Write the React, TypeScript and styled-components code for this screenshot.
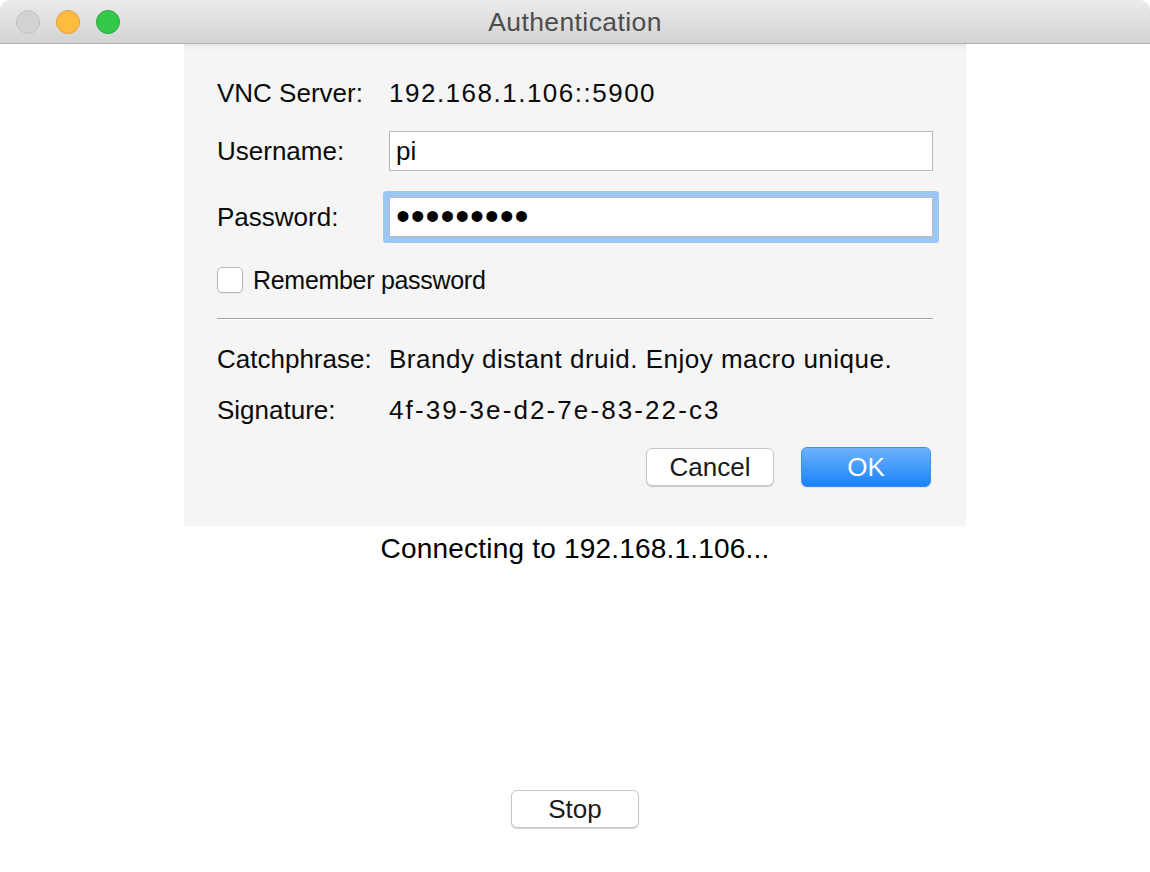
import React from "react";
import styled, { createGlobalStyle } from "styled-components";

const Global = createGlobalStyle`
  html, body { margin: 0; padding: 0; background: #ffffff; }
  body { font-family: "Liberation Sans", Arial, Helvetica, sans-serif; color: #111; }
  * { box-sizing: border-box; }
`;

const Window = styled.div`
  width: 1150px;
  height: 872px;
  display: flex;
  flex-direction: column;
  background: #ffffff;
`;

const TitleBar = styled.div`
  height: 44px;
  flex: none;
  display: flex;
  align-items: center;
  position: relative;
  background: linear-gradient(#ebebeb, #d3d3d3);
  border-bottom: 1px solid #b2b2b2;
  border-radius: 10px 10px 0 0;
`;

const Lights = styled.div`
  display: flex;
  gap: 16px;
  padding-left: 16px;
  position: absolute;
  left: 0;
  top: 10px;
`;

const Light = styled.div<{ $bg: string; $border: string }>`
  width: 24px;
  height: 24px;
  border-radius: 50%;
  background: ${(p) => p.$bg};
  border: 1px solid ${(p) => p.$border};
`;

const Title = styled.div`
  flex: 1;
  text-align: center;
  font-size: 26.5px;
  letter-spacing: 0.4px;
  color: #4d4d4d;
  padding-top: 2px;
`;

const Content = styled.div`
  flex: 1;
  display: flex;
  flex-direction: column;
  align-items: center;
`;

const Sheet = styled.div`
  width: 782px;
  background: #f5f5f5;
  padding: 29px 33px 39px 33px;
  display: flex;
  flex-direction: column;
  box-shadow: inset 0 7px 7px -6px rgba(0, 0, 0, 0.1);
`;

const Row = styled.div<{ $h?: number; $mt?: number }>`
  display: flex;
  align-items: center;
  height: ${(p) => p.$h ?? 40}px;
  margin-top: ${(p) => p.$mt ?? 0}px;
  font-size: 26px;
  color: #0a0a0a;
`;

const Label = styled.div`
  width: 172px;
  flex: none;
  white-space: nowrap;
`;

const Value = styled.div<{ $ls?: number }>`
  white-space: nowrap;
  letter-spacing: ${(p) => p.$ls ?? 0}px;
`;

const Field = styled.div<{ $focused?: boolean }>`
  width: 544px;
  height: 40px;
  background: #ffffff;
  border: 1px solid #b8b8b8;
  display: flex;
  align-items: center;
  padding-left: 6px;
  font-size: 26px;
  box-shadow: ${(p) => (p.$focused ? "0 0 0 6px #9bc7f5" : "none")};
  border-radius: ${(p) => (p.$focused ? "1px" : "0")};
`;

const Dots = styled.span`
  font-size: 40px;
  letter-spacing: 0.8px;
  line-height: 1;
  margin-top: -2px;
  color: #000;
`;

const Check = styled.div`
  width: 26px;
  height: 26px;
  border-radius: 5px;
  border: 1px solid #b6b6b6;
  background: #ffffff;
  flex: none;
  box-shadow: 0 1px 1px rgba(0, 0, 0, 0.05);
`;

const CheckLabel = styled.div`
  margin-left: 10px;
  font-size: 25px;
  letter-spacing: -0.3px;
`;

const Separator = styled.div`
  margin-top: 25px;
  height: 2px;
  border-top: 1px solid #9f9f9f;
  border-bottom: 1px solid #ffffff;
`;

const Buttons = styled.div`
  display: flex;
  justify-content: flex-end;
  align-items: center;
  gap: 27px;
  height: 40px;
  margin-top: 17px;
  padding-right: 2px;
`;

const Button = styled.button<{ $primary?: boolean; $w: number }>`
  width: ${(p) => p.$w}px;
  height: ${(p) => (p.$primary ? 40 : 38)}px;
  border-radius: 6px;
  font-family: "Liberation Sans", Arial, sans-serif;
  font-size: 26px;
  padding: 0;
  color: ${(p) => (p.$primary ? "#ffffff" : "#1a1a1a")};
  border: 1px solid ${(p) => (p.$primary ? "#3a8ff3" : "#c6c6c6")};
  background: ${(p) =>
    p.$primary ? "linear-gradient(#6cb3fb, #1b83fb)" : "#ffffff"};
  box-shadow: ${(p) =>
    p.$primary ? "0 1px 1px rgba(0,0,0,0.08)" : "0 1px 1px rgba(0,0,0,0.18)"};
`;

const Status = styled.div`
  margin-top: 6px;
  height: 34px;
  line-height: 34px;
  font-size: 28px;
  letter-spacing: 0.2px;
  color: #000;
`;

const StopButton = styled(Button)`
  margin-top: 224px;
`;

export default function App() {
  return (
    <>
      <Global />
      <Window>
        <TitleBar>
          <Lights>
            <Light $bg="#d2d2d2" $border="#c1c1c1" />
            <Light $bg="#fdbc40" $border="#dfa13a" />
            <Light $bg="#34c84a" $border="#2aa93b" />
          </Lights>
          <Title>Authentication</Title>
        </TitleBar>
        <Content>
          <Sheet>
            <Row>
              <Label>VNC Server:</Label>
              <Value $ls={1.5}>192.168.1.106::5900</Value>
            </Row>
            <Row $mt={18}>
              <Label>Username:</Label>
              <Field>pi</Field>
            </Row>
            <Row $mt={26}>
              <Label>Password:</Label>
              <Field $focused>
                <Dots>•••••••••</Dots>
              </Field>
            </Row>
            <Row $h={26} $mt={30}>
              <Check />
              <CheckLabel>Remember password</CheckLabel>
            </Row>
            <Separator />
            <Row $mt={19}>
              <Label>Catchphrase:</Label>
              <Value $ls={0.5}>Brandy distant druid. Enjoy macro unique.</Value>
            </Row>
            <Row $mt={11}>
              <Label>Signature:</Label>
              <Value $ls={2.1}>4f-39-3e-d2-7e-83-22-c3</Value>
            </Row>
            <Buttons>
              <Button $w={128}>Cancel</Button>
              <Button $primary $w={130}>OK</Button>
            </Buttons>
          </Sheet>
          <Status>Connecting to 192.168.1.106...</Status>
          <StopButton $w={128}>Stop</StopButton>
        </Content>
      </Window>
    </>
  );
}
